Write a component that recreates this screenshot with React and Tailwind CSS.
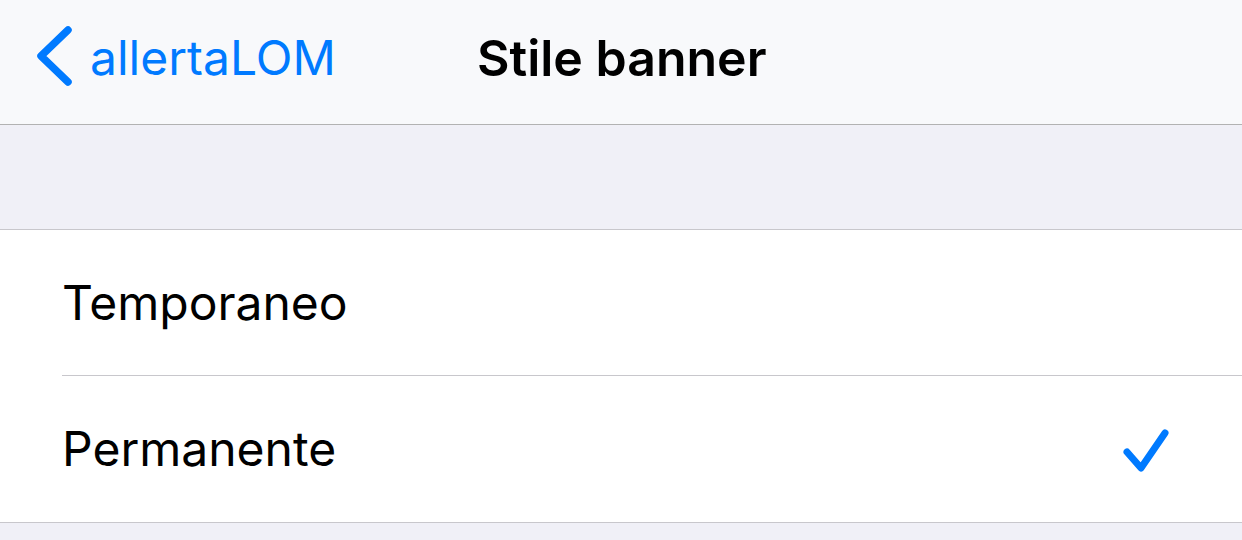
const Chevron = () => (
  <svg width="40" height="64" viewBox="0 0 40 64" className="shrink-0">
    <path d="M34 4 L7 30 L34 56" fill="none" stroke="#007aff" strokeWidth="7.5" strokeLinecap="round" strokeLinejoin="round" />
  </svg>
);

const Check = () => (
  <svg width="52" height="46" viewBox="0 0 52 46">
    <path d="M9 26 L23 42 L47 7" fill="none" stroke="#007aff" strokeWidth="7" strokeLinecap="round" strokeLinejoin="round" />
  </svg>
);

const Row = ({ label, checked, last }) => (
  <div className="flex h-[146px] items-center pl-[62px]">
    <div className={"flex h-full flex-1 items-center pr-[72px] " + (last ? "" : "border-b border-[#c8c7cc]")}>
      <span className="flex-1 text-[48px] text-black">{label}</span>
      {checked && <Check />}
    </div>
  </div>
);

export default function App() {
  return (
    <div className="h-[540px] w-[1242px] overflow-hidden bg-[#f0f0f7]" style={{ fontFamily: "Inter, 'Noto Sans', sans-serif" }}>
      <div className="relative flex h-[125px] items-center border-b border-[#b2b2b2] bg-[#f8f9fb] pb-[8px]">
        <div className="flex items-center pl-[34px] text-[48px] text-[#007aff]">
          <Chevron />
          <span className="ml-[16px]">allertaLOM</span>
        </div>
        <div className="absolute left-[477px] top-0 flex h-full items-center pb-[8px] text-[50px] font-semibold text-black">
          Stile banner
        </div>
      </div>
      <div className="h-[104px]" />
      <div className="border-y border-[#c8c7cc] bg-white">
        <Row label="Temporaneo" />
        <Row label="Permanente" checked last />
      </div>
    </div>
  );
}
